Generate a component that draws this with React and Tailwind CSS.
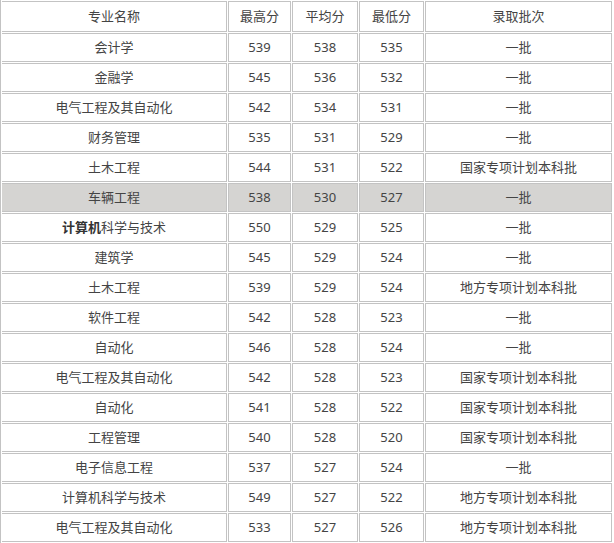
import React from "react";

const rows = [
  ["会计学", "539", "538", "535", "一批"],
  ["金融学", "545", "536", "532", "一批"],
  ["电气工程及其自动化", "542", "534", "531", "一批"],
  ["财务管理", "535", "531", "529", "一批"],
  ["土木工程", "544", "531", "522", "国家专项计划本科批"],
  ["车辆工程", "538", "530", "527", "一批", "hl"],
  ["计算机科学与技术", "550", "529", "525", "一批", "bold"],
  ["建筑学", "545", "529", "524", "一批"],
  ["土木工程", "539", "529", "524", "地方专项计划本科批"],
  ["软件工程", "542", "528", "523", "一批"],
  ["自动化", "546", "528", "524", "一批"],
  ["电气工程及其自动化", "542", "528", "523", "国家专项计划本科批"],
  ["自动化", "541", "528", "522", "国家专项计划本科批"],
  ["工程管理", "540", "528", "520", "国家专项计划本科批"],
  ["电子信息工程", "537", "527", "524", "一批"],
  ["计算机科学与技术", "549", "527", "522", "地方专项计划本科批"],
  ["电气工程及其自动化", "533", "527", "526", "地方专项计划本科批"],
];

const cell = "border border-[#c3c3c3] text-center align-middle p-0";

export default function App() {
  return (
    <div
      className="w-[614px] h-[543px] overflow-hidden bg-white border-l border-[#c3c3c3] text-[13px] text-[#444]"
      style={{ fontFamily: '"Noto Sans", "Noto Sans CJK SC", sans-serif' }}
    >
      <table className="w-[612px] table-fixed border-separate border-spacing-[1px]">
        <colgroup>
          <col className="w-[225px]" />
          <col className="w-[63px]" />
          <col className="w-[66px]" />
          <col className="w-[65px]" />
          <col className="w-[187px]" />
        </colgroup>
        <thead>
          <tr className="h-[31px]">
            <th className={`${cell} border-l-0 font-normal`}>专业名称</th>
            <th className={`${cell} font-normal`}>最高分</th>
            <th className={`${cell} font-normal`}>平均分</th>
            <th className={`${cell} font-normal`}>最低分</th>
            <th className={`${cell} font-normal`}>录取批次</th>
          </tr>
        </thead>
        <tbody>
          {rows.map((r, i) => (
            <tr key={i} className={`h-[29px] ${r[5] === "hl" ? "bg-[#d5d4d2]" : ""}`}>
              <td className={`${cell} border-l-0`}>
                {r[5] === "bold" ? (
                  <>
                    <b className="font-bold text-[#333]">计算机</b>科学与技术
                  </>
                ) : (
                  r[0]
                )}
              </td>
              <td className={cell}>{r[1]}</td>
              <td className={cell}>{r[2]}</td>
              <td className={cell}>{r[3]}</td>
              <td className={cell}>{r[4]}</td>
            </tr>
          ))}
        </tbody>
      </table>
    </div>
  );
}
